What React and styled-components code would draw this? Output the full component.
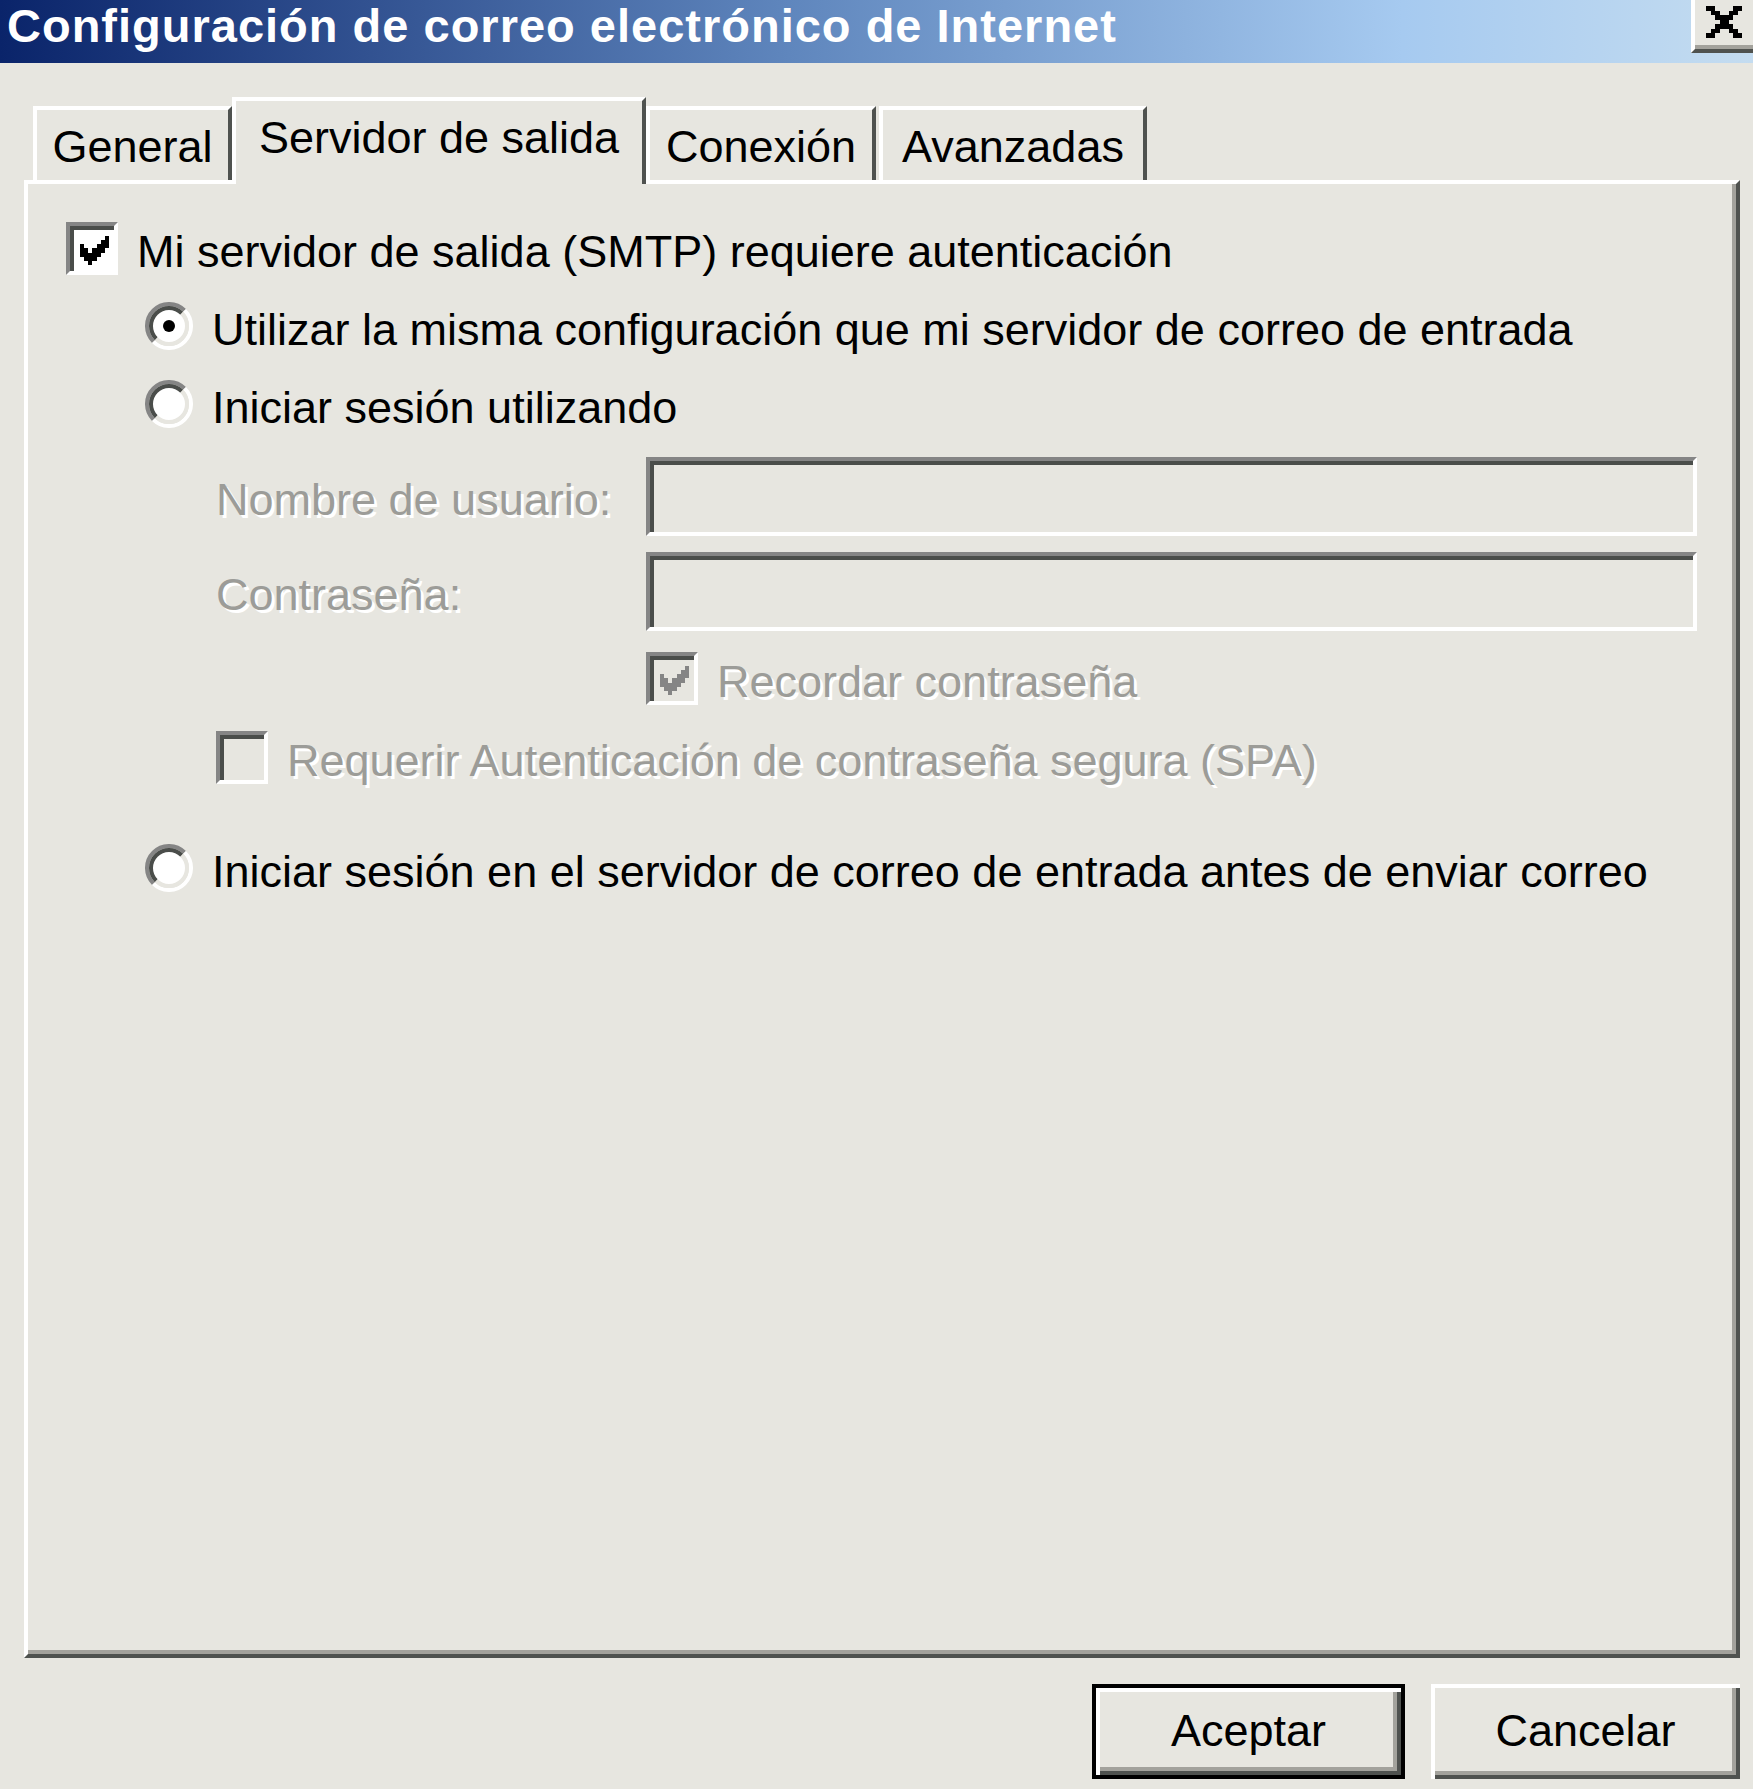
import React from 'react';
import styled, { createGlobalStyle } from 'styled-components';

const GlobalStyle = createGlobalStyle`
	html, body {
		margin: 0;
		padding: 0;
		background: #e7e6e0;
	}
`;

const Window = styled.div`
	width: 1753px;
	height: 1789px;
	display: flex;
	flex-direction: column;
	background: #e7e6e0;
	font-family: Tahoma, 'Liberation Sans', Arial, sans-serif;
	font-size: 45px;
	color: #000;
	overflow: hidden;
`;

const TitleBar = styled.div`
	height: 63px;
	flex-shrink: 0;
	display: flex;
	align-items: flex-start;
	background: linear-gradient(to right, #0a246a 0%, #5f86bd 45%, #a6caf0 80%, #c4dcf0 100%);
`;

const Title = styled.div`
	padding: 0 0 0 7px;
	font-size: 47px;
	line-height: 52px;
	letter-spacing: 1px;
	font-weight: bold;
	color: #fff;
	white-space: nowrap;
`;

const CloseButton = styled.div`
	margin-left: auto;
	width: 62px;
	height: 53px;
	box-sizing: border-box;
	display: flex;
	align-items: center;
	justify-content: center;
	padding-bottom: 6px;
	background: #e7e6e0;
	border-left: 4px solid #fff;
	border-bottom: 4px solid #4f524f;
	box-shadow: inset 0 -4px 0 #a3a29c;
`;

const Body = styled.div`
	flex: 1;
	display: flex;
	flex-direction: column;
	padding: 34px 13px 0 24px;
`;

const TabRow = styled.div`
	display: flex;
	align-items: flex-end;
	height: 83px;
	padding-left: 9px;
`;

const Tab = styled.div`
	position: relative;
	z-index: ${(p) => (p.$active ? 2 : 0)};
	width: ${(p) => p.$w}px;
	height: ${(p) => (p.$active ? 87 : 74)}px;
	margin-left: ${(p) => p.$gap || 0}px;
	margin-bottom: ${(p) => (p.$active ? -4 : 0)}px;
	box-sizing: border-box;
	padding-top: 14px;
	text-align: center;
	line-height: 45px;
	white-space: nowrap;
	background: #e7e6e0;
	border-top: 4px solid #fff;
	border-left: 4px solid #fff;
	border-right: 4px solid #4f524f;
`;

const Panel = styled.div`
	height: 1478px;
	box-sizing: border-box;
	display: flex;
	flex-direction: column;
	padding: 37px 0 0 38px;
	border-top: 4px solid #fff;
	border-left: 4px solid #fff;
	border-right: 4px solid #4f524f;
	border-bottom: 4px solid #4f524f;
	box-shadow: inset -4px -4px 0 #a3a29c;
`;

const Row = styled.div`
	display: flex;
	align-items: center;
	height: ${(p) => p.$h || 54}px;
	margin-top: ${(p) => p.$top || 0}px;
	margin-left: ${(p) => p.$indent || 0}px;
	gap: ${(p) => (p.$field ? 0 : 19)}px;
	white-space: nowrap;
`;

const Label = styled.span`
	padding-top: 7px;
	line-height: 54px;
	color: ${(p) => (p.$disabled ? '#9c9c98' : '#000')};
	text-shadow: ${(p) => (p.$disabled ? '3px 3px 0 #fff' : 'none')};
`;

const Box = styled.span`
	width: 52px;
	height: 53px;
	flex-shrink: 0;
	box-sizing: border-box;
	display: flex;
	align-items: center;
	justify-content: center;
	background: ${(p) => (p.$disabled ? '#e7e6e0' : '#fff')};
	border-style: solid;
	border-width: 4px;
	border-color: #858585 #fff #fff #858585;
	box-shadow: inset 4px 4px 0 #4a4d4a;
	padding: 4px 0 0 4px;
`;

const FieldLabel = styled(Label)`
	width: 430px;
	flex-shrink: 0;
`;

const TextBox = styled.div`
	width: 1051px;
	height: 79px;
	box-sizing: border-box;
	background: #e7e6e0;
	border-style: solid;
	border-width: 4px;
	border-color: #858585 #fff #fff #858585;
	box-shadow: inset 4px 4px 0 #4a4d4a;
`;

const Footer = styled.div`
	display: flex;
	justify-content: flex-end;
	gap: 26px;
	padding-top: 26px;
`;

const Button = styled.div`
	width: ${(p) => p.$w}px;
	height: 95px;
	box-sizing: border-box;
	display: flex;
	align-items: center;
	justify-content: center;
	background: #e7e6e0;
	border: ${(p) => (p.$default ? '4px solid #000' : 'none')};
	box-shadow: inset 4px 4px 0 #fff, inset -4px -4px 0 #4f524f, inset -8px -8px 0 #a3a29c;
	line-height: 45px;
	padding-bottom: 2px;
`;

const CHECK_PIXELS = [
	[6, 0], [5, 1], [6, 1], [0, 2], [4, 2], [5, 2], [6, 2],
	[0, 3], [1, 3], [3, 3], [4, 3], [5, 3],
	[0, 4], [1, 4], [2, 4], [3, 4], [4, 4],
	[1, 5], [2, 5], [3, 5], [2, 6],
];

const CLOSE_PIXELS = [
	'xx....xx',
	'.xx..xx.',
	'..xxxx..',
	'...xx...',
	'..xxxx..',
	'.xx..xx.',
	'xx....xx',
];

function CheckMark({ color }) {
	return (
		<svg width="29" height="29" viewBox="0 0 7 7" shapeRendering="crispEdges">
			{CHECK_PIXELS.map(([x, y]) => (
				<rect key={`${x}-${y}`} x={x} y={y} width="1" height="1" fill={color} />
			))}
		</svg>
	);
}

function CloseGlyph() {
	const cells = [];
	CLOSE_PIXELS.forEach((line, y) =>
		line.split('').forEach((c, x) => {
			if (c === 'x') cells.push(<rect key={`${x}-${y}`} x={x} y={y} width="1" height="1" />);
		})
	);
	return (
		<svg width="36" height="32" viewBox="0 0 8 7" shapeRendering="crispEdges" fill="#000">
			{cells}
		</svg>
	);
}

function Checkbox({ checked, disabled }) {
	return (
		<Box $disabled={disabled}>
			{checked && <CheckMark color={disabled ? '#858585' : '#000'} />}
		</Box>
	);
}

function Radio({ checked }) {
	return (
		<svg width="48" height="48" viewBox="0 0 48 48" style={{ flexShrink: 0 }}>
			<circle cx="24" cy="24" r="17" fill="#fff" />
			<path d="M8.44 39.56 A22 22 0 0 1 39.56 8.44" fill="none" stroke="#858585" strokeWidth="4" />
			<path d="M39.56 8.44 A22 22 0 0 1 8.44 39.56" fill="none" stroke="#fff" strokeWidth="4" />
			<path d="M11.27 36.73 A18 18 0 0 1 36.73 11.27" fill="none" stroke="#4a4d4a" strokeWidth="4" />
			<path d="M36.73 11.27 A18 18 0 0 1 11.27 36.73" fill="none" stroke="#e7e6e0" strokeWidth="4" />
			{checked && <circle cx="24" cy="24" r="6" fill="#000" />}
		</svg>
	);
}

export default function App() {
	return (
		<>
			<GlobalStyle />
			<Window>
				<TitleBar>
					<Title>Configuración de correo electrónico de Internet</Title>
					<CloseButton>
						<CloseGlyph />
					</CloseButton>
				</TitleBar>
				<Body>
					<TabRow>
						<Tab $w={199}>General</Tab>
						<Tab $w={414} $active>
							Servidor de salida
						</Tab>
						<Tab $w={230}>Conexión</Tab>
						<Tab $w={268} $gap={3}>
							Avanzadas
						</Tab>
					</TabRow>
					<Panel>
						<Row>
							<Checkbox checked />
							<Label>Mi servidor de salida (SMTP) requiere autenticación</Label>
						</Row>
						<Row $top={24} $indent={79}>
							<Radio checked />
							<Label>Utilizar la misma configuración que mi servidor de correo de entrada</Label>
						</Row>
						<Row $top={24} $indent={79}>
							<Radio />
							<Label>Iniciar sesión utilizando</Label>
						</Row>
						<Row $top={26} $indent={150} $h={79} $field>
							<FieldLabel $disabled>Nombre de usuario:</FieldLabel>
							<TextBox />
						</Row>
						<Row $top={16} $indent={150} $h={79} $field>
							<FieldLabel $disabled>Contraseña:</FieldLabel>
							<TextBox />
						</Row>
						<Row $top={21} $indent={580} $h={53}>
							<Checkbox checked disabled />
							<Label $disabled>Recordar contraseña</Label>
						</Row>
						<Row $top={25} $indent={150} $h={54}>
							<Checkbox disabled />
							<Label $disabled>Requerir Autenticación de contraseña segura (SPA)</Label>
						</Row>
						<Row $top={57} $indent={79}>
							<Radio />
							<Label>Iniciar sesión en el servidor de correo de entrada antes de enviar correo</Label>
						</Row>
					</Panel>
					<Footer>
						<Button $w={313} $default>
							Aceptar
						</Button>
						<Button $w={309}>Cancelar</Button>
					</Footer>
				</Body>
			</Window>
		</>
	);
}
